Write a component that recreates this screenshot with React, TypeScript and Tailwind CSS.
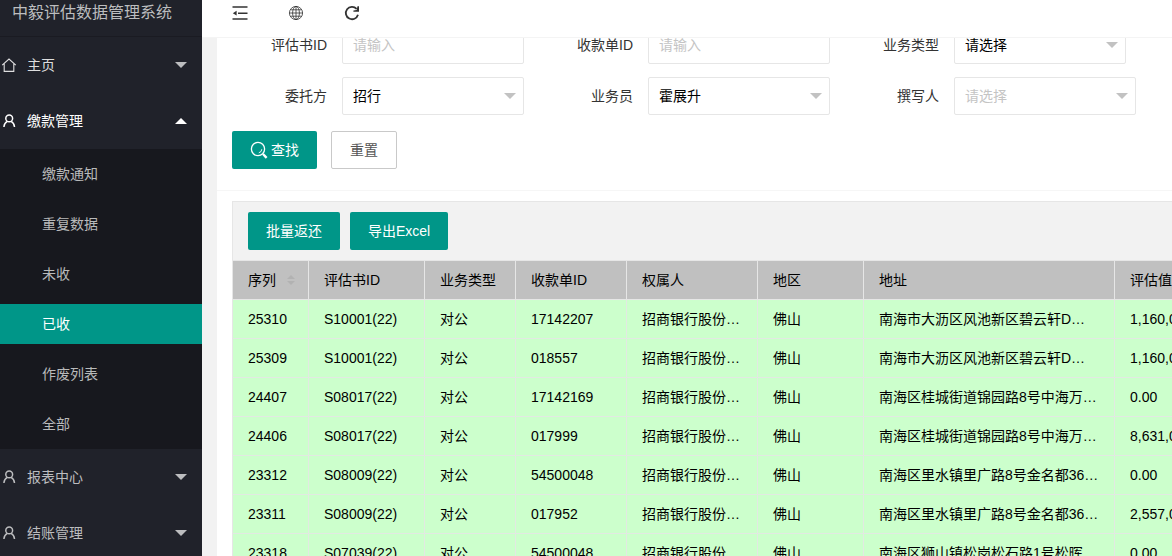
import { useState } from 'react';
import type { ReactNode } from 'react';

const rows = [
  ['25310', 'S10001(22)', '对公', '17142207', '招商银行股份…', '佛山', '南海市大沥区风池新区碧云轩D…', '1,160,000.00'],
  ['25309', 'S10001(22)', '对公', '018557', '招商银行股份…', '佛山', '南海市大沥区风池新区碧云轩D…', '1,160,000.00'],
  ['24407', 'S08017(22)', '对公', '17142169', '招商银行股份…', '佛山', '南海区桂城街道锦园路8号中海万…', '0.00'],
  ['24406', 'S08017(22)', '对公', '017999', '招商银行股份…', '佛山', '南海区桂城街道锦园路8号中海万…', '8,631,000.00'],
  ['23312', 'S08009(22)', '对公', '54500048', '招商银行股份…', '佛山', '南海区里水镇里广路8号金名都36…', '0.00'],
  ['23311', 'S08009(22)', '对公', '017952', '招商银行股份…', '佛山', '南海区里水镇里广路8号金名都36…', '2,557,000.00'],
  ['23318', 'S07039(22)', '对公', '54500048', '招商银行股份…', '佛山', '南海区狮山镇松岗松石路1号松晖…', '0.00'],
];

const columns = [
  { title: '序列', width: 'w-[76px]', sort: true },
  { title: '评估书ID', width: 'w-[116px]' },
  { title: '业务类型', width: 'w-[91px]' },
  { title: '收款单ID', width: 'w-[111px]' },
  { title: '权属人', width: 'w-[131px]' },
  { title: '地区', width: 'w-[106px]' },
  { title: '地址', width: 'w-[251px]' },
  { title: '评估值', width: 'w-[140px]' },
];

const subMenu = ['缴款通知', '重复数据', '未收', '已收', '作废列表', '全部'];

const primaryBtn = 'h-[38px] px-[18px] rounded-xs bg-[#009688] text-white hover:opacity-80';

function HomeIcon() {
  return (
    <svg className="w-4 h-4" viewBox="0 0 16 16" fill="none" stroke="currentColor" strokeWidth="1.1">
      <path d="M1.2 8.2 8 2l6.8 6.2M3.2 6.8v7.6h9.6V6.8" />
    </svg>
  );
}

function UserIcon() {
  return (
    <svg className="w-4 h-4" viewBox="0 0 16 16" fill="none" stroke="currentColor" strokeWidth="1.5">
      <circle cx="8.2" cy="5.4" r="3.4" />
      <path d="M6.3 8.4C4.2 9.4 3.1 11.4 2.9 14M10.1 8.4c2.1 1 3.2 3 3.4 5.6" />
    </svg>
  );
}

function Caret({ up = false, className = '' }: { up?: boolean; className?: string }) {
  return (
    <svg className={`w-3 h-1.5 ${className}`} viewBox="0 0 12 6" fill="currentColor">
      <path d={up ? 'M0 6 6 0l6 6z' : 'M0 0h12L6 6z'} />
    </svg>
  );
}

function MenuItem({ label, icon, open, color, caret = '', onClick }: {
  label: string; icon: ReactNode; open?: boolean; color: string; caret?: string; onClick?: () => void;
}) {
  return (
    <button type="button" onClick={onClick}
      className={`flex items-center w-full h-14 pl-px pr-[15px] hover:text-white ${color}`}>
      {icon}
      <span className="ml-2.5 flex-1 text-left">{label}</span>
      <Caret up={open} className={caret} />
    </button>
  );
}

function Field({ id, label, children }: { id: string; label: string; children: ReactNode }) {
  return (
    <div className="flex items-center w-[292px]">
      <label htmlFor={id} className="w-[110px] pr-[15px] text-right text-[#333]">{label}</label>
      {children}
    </div>
  );
}

function TextField({ id, label }: { id: string; label: string }) {
  return (
    <Field id={id} label={label}>
      <input id={id} type="text" placeholder="请输入"
        className="w-[182px] h-[38px] pl-2.5 border border-[#e6e6e6] rounded-xs outline-none placeholder:text-[#c4c4c4]" />
    </Field>
  );
}

function SelectField({ id, label, value, width = 'w-[182px]', color = 'text-black' }: {
  id: string; label: string; value: string; width?: string; color?: string;
}) {
  return (
    <Field id={id} label={label}>
      <div className={`relative ${width}`}>
        <select id={id} defaultValue={value}
          className={`w-full h-[38px] pl-2.5 border border-[#e6e6e6] rounded-xs bg-white appearance-none outline-none ${color}`}>
          <option>{value}</option>
        </select>
        <Caret className="absolute right-2 top-4 text-[#c2c2c2] pointer-events-none" />
      </div>
    </Field>
  );
}

export default function App() {
  const [open, setOpen] = useState(true);
  const [active, setActive] = useState('已收');

  return (
    <div className="flex h-screen overflow-hidden bg-[#f2f2f2] text-sm font-['Liberation_Sans','Noto_Sans_CJK_SC',sans-serif]">
      {/* Sidebar */}
      <aside className="w-[202px] shrink-0 overflow-hidden bg-[#20222a]">
        <div className="h-[37px] pl-3 text-base leading-[26px] text-[#bcbdbf] border-b border-[#1a1b22]">中毅评估数据管理系统</div>
        <nav>
          <MenuItem label="主页" icon={<HomeIcon />} color="text-[#dededf]" caret="text-[#bcbdbf]" />
          <MenuItem label="缴款管理" icon={<UserIcon />} open={open} color="text-white" onClick={() => setOpen(!open)} />
          {open && (
            <ul className="flex flex-col gap-2.5 py-[5px] bg-[#17181e]">
              {subMenu.map(name => (
                <li key={name}>
                  <a href="#" onClick={e => { e.preventDefault(); setActive(name); }}
                    className={`block h-10 pl-[42px] leading-10 ${active === name ? 'bg-[#009688] text-white' : 'text-[#b9babb]'}`}>
                    {name}
                  </a>
                </li>
              ))}
            </ul>
          )}
          <MenuItem label="报表中心" icon={<UserIcon />} color="text-[#bcbdbf]" />
          <MenuItem label="结账管理" icon={<UserIcon />} color="text-[#bcbdbf]" />
        </nav>
      </aside>

      <div className="flex flex-col flex-1 min-w-0">
        {/* Top bar */}
        <header className="flex items-start gap-10 shrink-0 h-[38px] pl-[30px] pt-[5px] bg-white border-b border-[#f4f4f4] text-[#333]">
          <button type="button" aria-label="收起菜单">
            <svg className="w-4 h-4" viewBox="0 0 16 16" fill="none" stroke="currentColor" strokeWidth="1.6">
              <path d="M0.5 2h15M6 8.2h9.5M0.5 14h15" />
              <path d="M0.8 8.2 4.6 5.8v4.8z" fill="currentColor" stroke="none" />
            </svg>
          </button>
          <button type="button" aria-label="网站">
            <svg className="w-4 h-4" viewBox="0 0 16 16" fill="none" stroke="currentColor" strokeWidth="0.8">
              <circle cx="8" cy="8" r="6.6" />
              <ellipse cx="8" cy="8" rx="3.4" ry="6.6" />
              <path d="M8 1.4v13.2M1.4 8h13.2M2.4 4.8h11.2M2.4 11.2h11.2" />
            </svg>
          </button>
          <button type="button" aria-label="刷新">
            <svg className="w-4 h-4" viewBox="0 0 16 16" fill="none" stroke="currentColor" strokeWidth="1.8">
              <path d="M14 9.8A6.2 6.2 0 1 1 12.6 3.8" />
              <path d="M15 1.2v5.6H9.4V5.4l3.2-.4.9-3.8z" fill="currentColor" stroke="none" />
            </svg>
          </button>
        </header>

        <main className="flex-1 min-h-0 ml-[15px] overflow-hidden bg-white">
          {/* Search form, scrolled a little under the top bar */}
          <form onSubmit={e => e.preventDefault()} className="-mt-3 pl-[15px] pb-[21px] border-b border-[#f6f6f6]">
            <div className="flex flex-wrap gap-x-3.5 gap-y-[13px]">
              <TextField id="reportId" label="评估书ID" />
              <TextField id="receiptId" label="收款单ID" />
              <SelectField id="bizType" label="业务类型" value="请选择" width="w-[172px]" />
              <SelectField id="client" label="委托方" value="招行" />
              <SelectField id="salesman" label="业务员" value="霍展升" />
              <SelectField id="writer" label="撰写人" value="请选择" color="text-[#c4c4c4]" />
            </div>
            <div className="flex gap-3.5 mt-4">
              <button type="submit" className={`flex items-center gap-[3px] ${primaryBtn}`}>
                <svg className="w-[18px] h-[18px]" viewBox="0 0 18 18" fill="none" stroke="currentColor">
                  <circle cx="8" cy="8" r="6.6" strokeWidth="1.3" />
                  <path d="M11.8 8.2a3.8 3.8 0 0 1-3 3.6" strokeWidth="0.9" />
                  <path d="m13 13 3.6 3.8" strokeWidth="2.4" />
                </svg>
                查找
              </button>
              <button type="reset" className="h-[38px] px-[18px] border border-[#c9c9c9] rounded-xs text-[#555]">重置</button>
            </div>
          </form>

          {/* Result list */}
          <div className="w-max mt-2.5 ml-[15px] border border-[#e6e6e6]">
            <div className="flex gap-2.5 h-[59px] px-[15px] pt-2.5 bg-[#f2f2f2] border-b border-[#e6e6e6]">
              <button type="button" className={primaryBtn}>批量返还</button>
              <button type="button" className={primaryBtn}>导出Excel</button>
            </div>
            <table className="w-[1022px] table-fixed border-separate border-spacing-0 text-black">
              <thead className="bg-[#c0c0c0]">
                <tr>
                  {columns.map(col => (
                    <th key={col.title} className={`h-[39px] px-[15px] border-r border-b border-[#e6e6e6] text-left font-normal whitespace-nowrap ${col.width}`}>
                      <span className="flex items-center gap-[11px]">
                        {col.title}
                        {col.sort && (
                          <svg className="w-2 h-3 shrink-0 text-[#b2b2b2]" viewBox="0 0 8 12" fill="currentColor">
                            <path d="M0 5 4 1l4 4zM0 7h8l-4 4z" />
                          </svg>
                        )}
                      </span>
                    </th>
                  ))}
                </tr>
              </thead>
              <tbody className="bg-[#ccffcc]">
                {rows.map(row => (
                  <tr key={row[0]}>
                    {row.map((cell, i) => (
                      <td key={i} className="h-[39px] px-[15px] border-r border-b border-[#e2e9e2] whitespace-nowrap">{cell}</td>
                    ))}
                  </tr>
                ))}
              </tbody>
            </table>
          </div>
        </main>
      </div>
    </div>
  );
}
